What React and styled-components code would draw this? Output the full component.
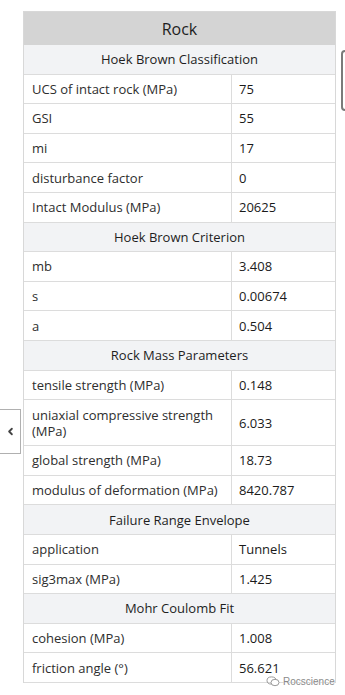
import React from "react";
import styled, { createGlobalStyle } from "styled-components";
import { ChevronLeft } from "lucide-react";

const Global = createGlobalStyle`
  html, body { margin: 0; padding: 0; background: #fff; }
  body { font-family: "Open Sans", "Noto Sans", sans-serif; }
`;

const Page = styled.div`
  position: relative;
  width: 345px;
  height: 695px;
  overflow: hidden;
  padding: 11px 0 0 23px;
  box-sizing: border-box;
`;

const Panel = styled.div`
  width: 313px;
  border: 1px solid #d8d8d8;
  border-bottom: none;
  box-sizing: border-box;
  color: #222;
`;

const Title = styled.div`
  height: 33px;
  box-sizing: border-box;
  background: #d4d4d4;
  display: flex;
  align-items: center;
  justify-content: center;
  font-size: 16px;
  color: #1e1e1e;
`;

const Section = styled.div`
  height: 29.6px;
  box-sizing: border-box;
  background: #f2f3f5;
  border-bottom: 1px solid #dcdcdc;
  display: flex;
  align-items: center;
  justify-content: center;
  font-size: 13px;
  color: #1e1e1e;
`;

const Row = styled.div`
  height: ${(p) => (p.$tall ? "46px" : "29.6px")};
  box-sizing: border-box;
  border-bottom: 1px solid #dcdcdc;
  display: grid;
  grid-template-columns: 208px 1fr;
  font-size: 13px;
`;

const Label = styled.div`
  display: flex;
  align-items: center;
  padding: 0 8px;
  border-right: 1px solid #dcdcdc;
  color: #2e2e2e;
  line-height: 16px;
`;

const Value = styled.div`
  display: flex;
  align-items: center;
  padding: 0 7px;
  color: #1a1a1a;
`;

const SideToggle = styled.div`
  position: absolute;
  left: -1px;
  top: 409px;
  width: 22px;
  height: 45px;
  box-sizing: border-box;
  border: 1px solid #b0b0b0;
  background: #fff;
  display: flex;
  align-items: center;
  justify-content: center;
  color: #444;
`;

const EdgeTab = styled.div`
  position: absolute;
  left: 341px;
  top: 50px;
  width: 12px;
  height: 61px;
  box-sizing: border-box;
  border: 2px solid #7a7a7a;
  border-radius: 4px;
  background: #fff;
`;

const Watermark = styled.div`
  position: absolute;
  left: 266px;
  top: 676px;
  display: flex;
  align-items: center;
  gap: 3px;
  font-family: "Liberation Sans", sans-serif;
  font-size: 10px;
  color: #8a8a8a;
  text-shadow: 0 0 1px #fff, 0 0 1px #fff;
`;

const sections = [
  {
    title: "Hoek Brown Classification",
    rows: [
      ["UCS of intact rock (MPa)", "75"],
      ["GSI", "55"],
      ["mi", "17"],
      ["disturbance factor", "0"],
      ["Intact Modulus (MPa)", "20625"],
    ],
  },
  {
    title: "Hoek Brown Criterion",
    rows: [
      ["mb", "3.408"],
      ["s", "0.00674"],
      ["a", "0.504"],
    ],
  },
  {
    title: "Rock Mass Parameters",
    rows: [
      ["tensile strength (MPa)", "0.148"],
      ["uniaxial compressive strength (MPa)", "6.033", true],
      ["global strength (MPa)", "18.73"],
      ["modulus of deformation (MPa)", "8420.787"],
    ],
  },
  {
    title: "Failure Range Envelope",
    rows: [
      ["application", "Tunnels"],
      ["sig3max (MPa)", "1.425"],
    ],
  },
  {
    title: "Mohr Coulomb Fit",
    rows: [
      ["cohesion (MPa)", "1.008"],
      ["friction angle (°)", "56.621"],
    ],
  },
];

export default function App() {
  return (
    <Page>
      <Global />
      <Panel>
        <Title>Rock</Title>
        {sections.map((s) => (
          <React.Fragment key={s.title}>
            <Section>{s.title}</Section>
            {s.rows.map(([l, v, tall]) => (
              <Row key={l} $tall={tall}>
                <Label>{l}</Label>
                <Value>{v}</Value>
              </Row>
            ))}
          </React.Fragment>
        ))}
      </Panel>
      <SideToggle>
        <ChevronLeft size={11} strokeWidth={4} />
      </SideToggle>
      <EdgeTab />
      <Watermark>
        <svg width="14" height="11" viewBox="0 0 14 11" fill="none" stroke="#9a9a9a" strokeWidth="1">
          <ellipse cx="5.5" cy="4.5" rx="4.5" ry="3.6" />
          <ellipse cx="9" cy="6.5" rx="4" ry="3.2" fill="#fff" />
        </svg>
        <span>Rocscience</span>
      </Watermark>
    </Page>
  );
}
